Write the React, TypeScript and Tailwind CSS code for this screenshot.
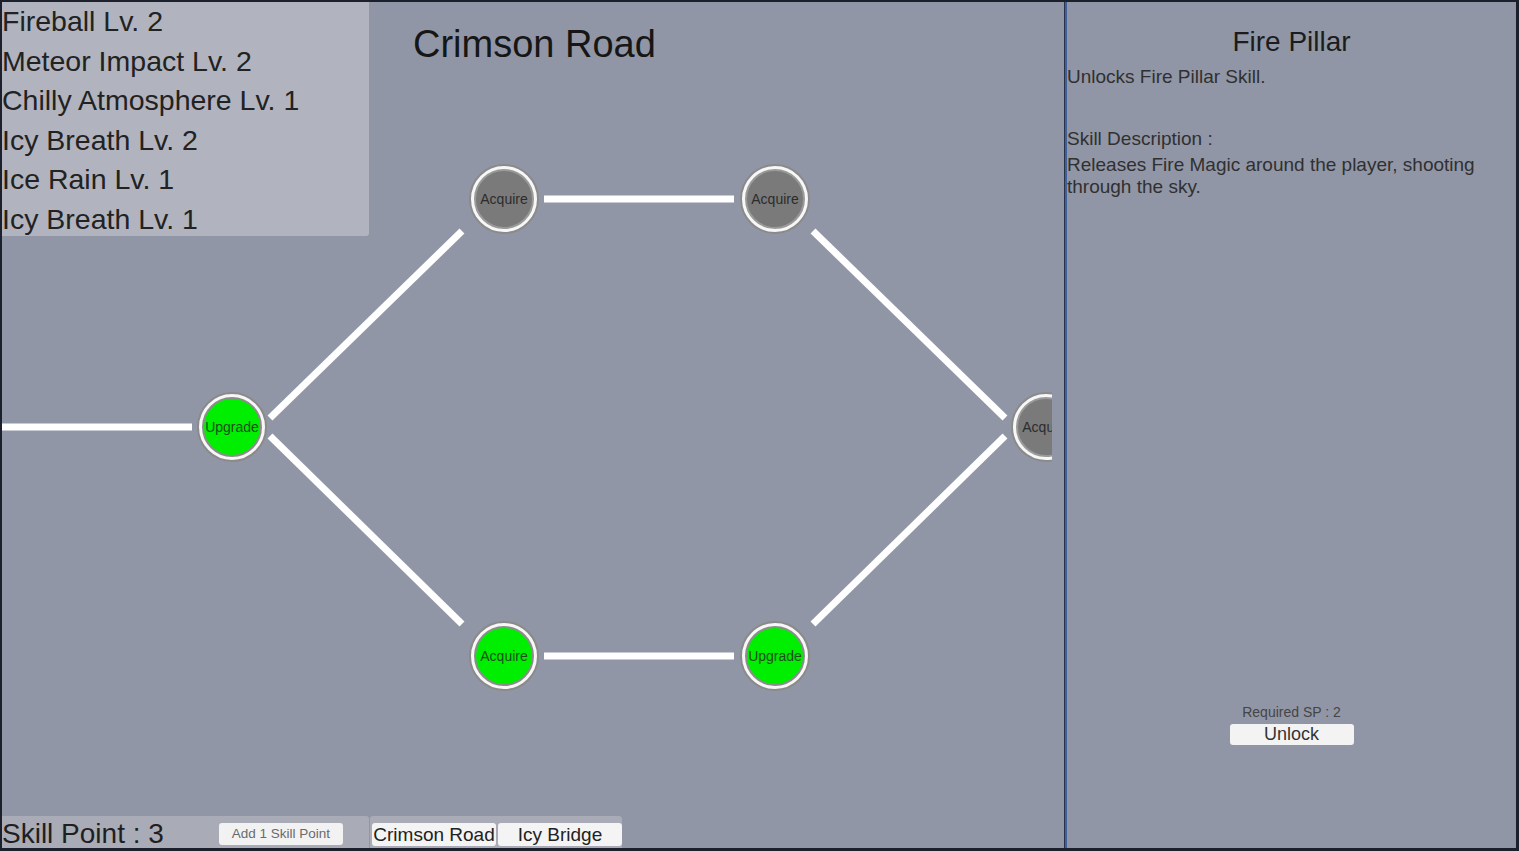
const learned = [
  "Fireball Lv. 2",
  "Meteor Impact Lv. 2",
  "Chilly Atmosphere Lv. 1",
  "Icy Breath Lv. 2",
  "Ice Rain Lv. 1",
  "Icy Breath Lv. 1",
]

// node positions on the tree canvas (left panel coords)
const nodes = [
  { label: "Upgrade", unlocked: true, pos: "left-[195px] top-[390px]" },
  { label: "Acquire", unlocked: false, pos: "left-[467px] top-[162px]" },
  { label: "Acquire", unlocked: false, pos: "left-[738px] top-[162px]" },
  { label: "Acquire", unlocked: true, pos: "left-[467px] top-[619px]" },
  { label: "Upgrade", unlocked: true, pos: "left-[738px] top-[619px]" },
  { label: "Acquire", unlocked: false, pos: "left-[1009px] top-[390px]" },
]

const links: [number, number, number, number][] = [
  [2, 427, 192, 427],
  [270, 418, 462, 231],
  [270, 436, 462, 624],
  [544, 199, 734, 199],
  [544, 656, 734, 656],
  [813, 231, 1005, 418],
  [813, 624, 1005, 436],
]

const SkillNode = ({ label, unlocked, pos }: { label: string; unlocked: boolean; pos: string }) => (
  <div className={`absolute ${pos} w-[70px] h-[70px] rounded-full bg-[#f7f7f7] border-2 border-[#8a8a8a] p-[3px]`}>
    <div
      className={
        unlocked
          ? "w-full h-full rounded-full bg-[#00ee00] border-2 border-[#8c8c8c] flex items-center justify-center text-[14px] text-[#1e4d1e] whitespace-nowrap"
          : "w-full h-full rounded-full bg-[#7a7a7a] border-2 border-[#9a9a9a] flex items-center justify-center text-[14px] text-[#2c2c2c] whitespace-nowrap"
      }
    >
      {label}
    </div>
  </div>
)

const SkillTree = () => (
  <div className="absolute left-0 top-0 w-[1050px] h-full overflow-hidden">
    <svg className="absolute left-0 top-0" width="1050" height="846">
      <g transform="translate(-2,-2)">
        {links.map(([x1, y1, x2, y2], i) => (
          <line key={i} x1={x1} y1={y1} x2={x2} y2={y2} stroke="#ffffff" strokeWidth={7} />
        ))}
      </g>
    </svg>
    {nodes.map((n, i) => (
      <SkillNode key={i} {...n} />
    ))}
  </div>
)

export default function App() {
  return (
    <div className="w-[1519px] h-[851px] bg-[#1b202c] pt-[2px] pb-[3px] pl-[2px] pr-[3px] flex font-['Liberation_Sans',Arial,sans-serif]">
      {/* tree side */}
      <div className="relative w-[1062px] h-full bg-[#9096a6] flex flex-col">
        <SkillTree />
        <div className="relative flex items-start">
          <div className="w-[367px] h-[234px] bg-[#b1b4be] rounded-br-[3px] text-[28.5px] leading-[39.5px] text-[#222]">
            {learned.map((s, i) => (
              <div key={i} className="whitespace-nowrap">{s}</div>
            ))}
          </div>
          <h1 className="ml-[44px] mt-[20px] text-[38px] leading-[44px] text-[#161616]">Crimson Road</h1>
        </div>
        <div className="relative mt-auto flex gap-[1px] h-[32px]">
          <div className="w-[367px] h-full bg-[#a9acb7] rounded-tr-[3px] flex items-start">
            <span className="text-[28px] leading-[32px] mt-[2px] text-[#1f1f1f] whitespace-nowrap">Skill Point : 3</span>
            <button className="ml-[55px] mt-[7px] w-[124px] h-[22px] rounded-[3px] bg-[#f2f2f2] text-[13.5px] text-[#6a6a6a] leading-[22px]">
              Add 1 Skill Point
            </button>
          </div>
          <div className="w-[252px] h-full bg-[#a9acb7] rounded-t-[3px] flex items-start gap-[2px] pl-[2px] pt-[7px]">
            <button className="w-[124px] h-[23px] rounded-[3px] bg-[#f4f4f4] text-[19px] leading-[23px] text-[#222] whitespace-nowrap">
              Crimson Road
            </button>
            <button className="w-[124px] h-[23px] rounded-[3px] bg-[#f4f4f4] text-[19px] leading-[23px] text-[#222] whitespace-nowrap">
              Icy Bridge
            </button>
          </div>
        </div>
      </div>

      <div className="w-[3px] h-full bg-[#41609a] border-l border-[#27324b]" />

      {/* details side */}
      <div className="flex-1 h-full bg-[#9096a6] flex flex-col text-[#303030]">
        <h2 className="mt-[24px] text-center text-[28px] leading-[32px] text-[#1c1c1c]">Fire Pillar</h2>
        <p className="mt-[8px] text-[19px] leading-[22px]">Unlocks Fire Pillar Skill.</p>
        <p className="mt-[40px] text-[19px] leading-[22px]">Skill Description :</p>
        <p className="mt-[4px] text-[19px] leading-[22px] pr-[8px]">
          Releases Fire Magic around the player, shooting through the sky.
        </p>
        <div className="mt-auto mb-[103px] flex flex-col items-center">
          <span className="text-[14px] leading-[16px] text-[#454545]">Required SP : 2</span>
          <button className="mt-[4px] w-[124px] h-[21px] rounded-[3px] bg-[#f3f3f3] text-[18px] leading-[21px] text-[#333]">
            Unlock
          </button>
        </div>
      </div>
    </div>
  )
}
